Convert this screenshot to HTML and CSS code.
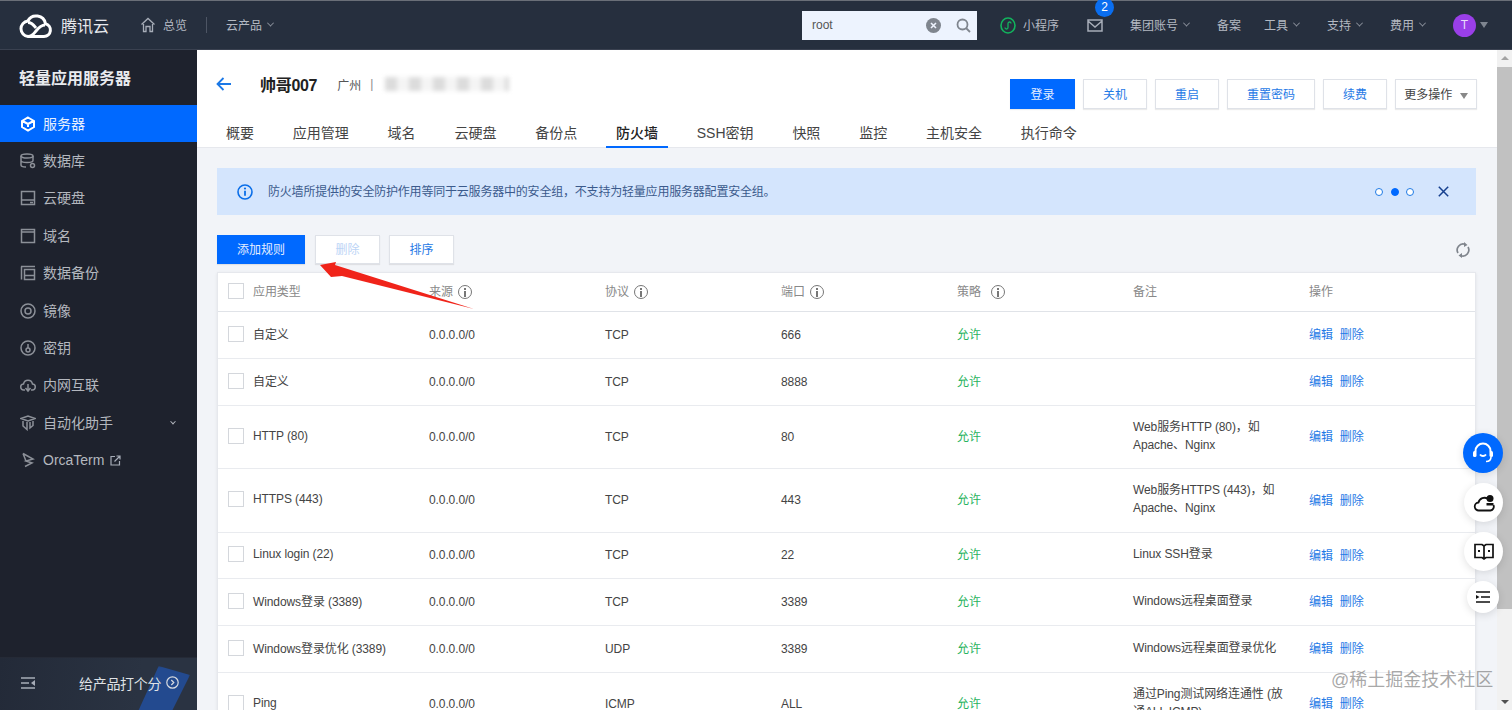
FILE: index.html
```html
<!DOCTYPE html>
<html lang="zh-CN">
<head>
<meta charset="utf-8">
<title>防火墙</title>
<link rel="stylesheet" href="styles.css">
</head>
<body>
<header class="topbar">
  <div class="logo">
    <svg class="logo-mark" width="34" height="25" viewBox="0 0 34 25"><path d="M9 23.500h16a6.500 6.500 0 0 0 1.500-12.800A9.500 9.500 0 0 0 8.800 8 7.800 7.800 0 0 0 9 23.500zM9 23.500c4 0 6-3 8-5.500s5-6 9-6" fill="none" stroke="#fff" stroke-width="3"/><path d="M9 9.500c4 0 6 3 8 5.500" fill="none" stroke="#fff" stroke-width="3"/></svg>
    <span class="logo-text">腾讯云</span>
  </div>
  <div class="nav-item overview">
    <svg width="16" height="16" viewBox="0 0 16 16"><path d="M1.500 7.500 8 1.500l6.500 6M3.500 7v7.500h2.500V9.500h4v5h2.500V7" fill="none" stroke="#a7adb8" stroke-width="1.300"/></svg>
    <span>总览</span>
  </div>
  <div class="nav-sep"></div>
  <div class="nav-item">云产品 <i class="chev"></i></div>
  <div class="spacer"></div>
  <div class="search">
    <span class="search-text">root</span>
    <svg width="15" height="15" viewBox="0 0 15 15"><circle cx="7.500" cy="7.500" r="7.500" fill="#7f858e"/><path d="m5 5 5 5M10 5l-5 5" stroke="#eef3fd" stroke-width="1.600"/></svg>
    <svg width="15" height="15" viewBox="0 0 15 15"><circle cx="6.500" cy="6.500" r="5" fill="none" stroke="#7f858e" stroke-width="1.800"/><path d="m10 10 4 4" stroke="#7f858e" stroke-width="1.800"/></svg>
  </div>
  <div class="nav-right">
    <div class="nav-item mini">
      <svg width="16" height="17" viewBox="0 0 16 17"><ellipse cx="8" cy="8.500" rx="7" ry="7.500" fill="none" stroke="#12b35d" stroke-width="1.600"/><path d="M5 10.500c0 2 3 2 3 0v-4c0-2 3-2 3 0" fill="none" stroke="#12b35d" stroke-width="1.300"/></svg>
      <span>小程序</span>
    </div>
    <div class="mail">
      <svg width="16" height="13" viewBox="0 0 16 13"><path d="M1 1h14v11H1zM1 2l7 6 7-6" fill="none" stroke="#a7adb8" stroke-width="1.500"/></svg>
      <span class="badge">2</span>
    </div>
    <div class="nav-item acct">集团账号 <i class="chev"></i></div>
    <div class="nav-item rec">备案</div>
    <div class="nav-item tool">工具 <i class="chev"></i></div>
    <div class="nav-item sup">支持 <i class="chev"></i></div>
    <div class="nav-item fee">费用 <i class="chev"></i></div>
    <span class="avatar">T</span>
    <i class="tri"></i>
  </div>
</header>

<div class="body-row">
  <aside class="sidebar">
    <h2 class="side-title">轻量应用服务器</h2>
    <nav class="side-nav">
      <a class="side-item active"><svg width="16" height="16" viewBox="0 0 16 16"><path d="M8 1.500 14 5v6l-6 3.500L2 11V5zM2.500 5 8 8l5.500-3M8 8v3" fill="none" stroke="#fff" stroke-width="2"/></svg><span>服务器</span></a>
      <a class="side-item"><svg width="16" height="16" viewBox="0 0 16 16"><ellipse cx="7" cy="3" rx="6" ry="2" class="ic"/><path d="M1 3v9c0 1 2 2 5 2M1 7.500c0 1 2 2 6 2s6-1 6-2V3" class="ic"/><circle cx="12.500" cy="12.500" r="2" class="ic"/></svg><span>数据库</span></a>
      <a class="side-item"><svg width="16" height="16" viewBox="0 0 16 16"><path d="M1.500 1.500h13v13h-13zM1.500 10h13M10 12.500h3" class="ic"/></svg><span>云硬盘</span></a>
      <a class="side-item"><svg width="16" height="16" viewBox="0 0 16 16"><path d="M1.500 1.500h13v13h-13zM1.500 4h13" class="ic"/></svg><span>域名</span></a>
      <a class="side-item"><svg width="16" height="16" viewBox="0 0 16 16"><path d="M1 1.500h14M1.500 1.500v13M4.500 4.500h10v10h-10zM4.500 10.500h10" class="ic"/></svg><span>数据备份</span></a>
      <a class="side-item"><svg width="16" height="16" viewBox="0 0 16 16"><circle cx="8" cy="8" r="7" class="ic"/><circle cx="8" cy="8" r="3" class="ic"/></svg><span>镜像</span></a>
      <a class="side-item"><svg width="16" height="16" viewBox="0 0 16 16"><circle cx="8" cy="8" r="7" class="ic"/><circle cx="8" cy="10" r="2" class="ic"/><path d="M8 4v4" class="ic"/></svg><span>密钥</span></a>
      <a class="side-item"><svg width="16" height="16" viewBox="0 0 16 16"><path d="M5 13H4a3 3 0 0 1-.5-6A4.600 4.600 0 0 1 12.500 7a3 3 0 0 1-.5 6h-1M8 7v7M5.500 11 8 14l2.500-3" class="ic"/></svg><span>内网互联</span></a>
      <a class="side-item"><svg width="16" height="16" viewBox="0 0 16 16"><path d="M1 3.500 8 1l7 2.500-7 2.500zM3 6v5l4 3.500V7M10 7v6l3-2.500V6" class="ic"/></svg><span>自动化助手</span><i class="chev side-chev"></i></a>
      <a class="side-item orca"><svg width="16" height="16" viewBox="0 0 16 16"><path d="M3 1.500 13 7l-7 2 6 2-7 3.500M3 1.500 6 9" class="ic"/></svg><span>OrcaTerm</span><svg class="ext" width="11" height="11" viewBox="0 0 11 11"><path d="M5 1.500H1v8.500h8.500V6M4.500 6.500 10 1M6.500 1H10v3.500" fill="none" stroke="#a7adb8" stroke-width="1.200"/></svg></a>
    </nav>
    <div class="side-foot">
      <svg width="15" height="12" viewBox="0 0 15 12"><path d="M0 1h14M0 6h8M0 11h14" stroke="#a7adb8" stroke-width="1.600"/><path d="M14 3v6l-4-3z" fill="#a7adb8"/></svg>
      <span class="rate">给产品打个分</span>
      <svg class="rate-go" width="13" height="13" viewBox="0 0 13 13"><circle cx="6.500" cy="6.500" r="5.700" fill="none" stroke="#d8dbe0" stroke-width="1.200"/><path d="m5.300 4 2.500 2.500-2.500 2.500" fill="none" stroke="#d8dbe0" stroke-width="1.200"/></svg>
    </div>
  </aside>

  <main class="main">
    <section class="page-head">
      <div class="title-row">
        <div class="title-left">
          <svg class="back" width="15" height="14" viewBox="0 0 15 14"><path d="M15 7H1.500M7.500 1 1.500 7l6 6" fill="none" stroke="#1b78e6" stroke-width="1.800"/></svg>
          <h1 class="inst-name">帅哥007</h1>
          <span class="region">广州</span>
          <span class="region-sep">|</span>
          <span class="blurred"></span>
        </div>
        <div class="spacer"></div>
        <div class="actions">
          <button class="btn primary login">登录</button>
          <button class="btn w-a">关机</button>
          <button class="btn w-a">重启</button>
          <button class="btn w-b">重置密码</button>
          <button class="btn w-a">续费</button>
          <button class="btn more">更多操作 <i class="tri small"></i></button>
        </div>
      </div>
      <div class="tabs">
        <a class="tab">概要</a>
        <a class="tab">应用管理</a>
        <a class="tab">域名</a>
        <a class="tab">云硬盘</a>
        <a class="tab">备份点</a>
        <a class="tab on">防火墙</a>
        <a class="tab">SSH密钥</a>
        <a class="tab">快照</a>
        <a class="tab">监控</a>
        <a class="tab">主机安全</a>
        <a class="tab">执行命令</a>
      </div>
    </section>

    <section class="content">
      <div class="notice">
        <svg width="16" height="16" viewBox="0 0 16 16"><circle cx="8" cy="8" r="7" fill="none" stroke="#0a6ee8" stroke-width="1.600"/><path d="M8 6.800v5" stroke="#0a6ee8" stroke-width="1.800"/><circle cx="8" cy="4.500" r="1.100" fill="#0a6ee8"/></svg>
        <span class="notice-text">防火墙所提供的安全防护作用等同于云服务器中的安全组，不支持为轻量应用服务器配置安全组。</span>
        <div class="spacer"></div>
        <div class="dots"><i class="dot"></i><i class="dot cur"></i><i class="dot"></i></div>
        <svg class="close" width="11" height="11" viewBox="0 0 11 11"><path d="m.8.800 9.400 9.400M10.200.800.8 10.200" stroke="#16408f" stroke-width="1.500"/></svg>
      </div>

      <div class="toolbar">
        <button class="btn primary add">添加规则</button>
        <button class="btn off">删除</button>
        <button class="btn sort">排序</button>
        <div class="spacer"></div>
        <svg width="14" height="16" viewBox="0 0 14 16"><path d="M2 11A6 6 0 0 1 9 2.300M12 5a6 6 0 0 1-7 8.700" fill="none" stroke="#80858d" stroke-width="1.700"/><path d="m8 0 3.500 3L8 5zM6 11 2.500 13.500 6 16z" fill="#80858d"/></svg>
      </div>

      <div class="table-card">
        <table class="rules">
          <colgroup><col class="c0"><col class="c1"><col class="c1"><col class="c1"><col class="c1"><col class="c1"><col></colgroup>
          <thead>
            <tr>
              <th><span class="cell-check"><i class="check"></i>应用类型</span></th>
              <th>来源<i class="info"></i></th>
              <th>协议<i class="info"></i></th>
              <th>端口<i class="info"></i></th>
              <th>策略<i class="info wide"></i></th>
              <th>备注</th>
              <th>操作</th>
            </tr>
          </thead>
          <tbody>
            <tr class="r47"><td><span class="cell-check"><i class="check"></i>自定义</span></td><td>0.0.0.0/0</td><td>TCP</td><td>666</td><td class="ok">允许</td><td></td><td class="ops"><a>编辑</a><a>删除</a></td></tr>
            <tr class="r47"><td><span class="cell-check"><i class="check"></i>自定义</span></td><td>0.0.0.0/0</td><td>TCP</td><td>8888</td><td class="ok">允许</td><td></td><td class="ops"><a>编辑</a><a>删除</a></td></tr>
            <tr class="r63"><td><span class="cell-check"><i class="check"></i>HTTP (80)</span></td><td>0.0.0.0/0</td><td>TCP</td><td>80</td><td class="ok">允许</td><td class="note">Web服务HTTP (80)，如Apache、Nginx</td><td class="ops"><a>编辑</a><a>删除</a></td></tr>
            <tr class="r64"><td><span class="cell-check"><i class="check"></i>HTTPS (443)</span></td><td>0.0.0.0/0</td><td>TCP</td><td>443</td><td class="ok">允许</td><td class="note">Web服务HTTPS (443)，如Apache、Nginx</td><td class="ops"><a>编辑</a><a>删除</a></td></tr>
            <tr class="r46"><td><span class="cell-check"><i class="check"></i>Linux login (22)</span></td><td>0.0.0.0/0</td><td>TCP</td><td>22</td><td class="ok">允许</td><td class="note">Linux SSH登录</td><td class="ops"><a>编辑</a><a>删除</a></td></tr>
            <tr class="r47"><td><span class="cell-check"><i class="check"></i>Windows登录 (3389)</span></td><td>0.0.0.0/0</td><td>TCP</td><td>3389</td><td class="ok">允许</td><td class="note">Windows远程桌面登录</td><td class="ops"><a>编辑</a><a>删除</a></td></tr>
            <tr class="r47"><td><span class="cell-check"><i class="check"></i>Windows登录优化 (3389)</span></td><td>0.0.0.0/0</td><td>UDP</td><td>3389</td><td class="ok">允许</td><td class="note">Windows远程桌面登录优化</td><td class="ops"><a>编辑</a><a>删除</a></td></tr>
            <tr class="r63"><td><span class="cell-check"><i class="check"></i>Ping</span></td><td>0.0.0.0/0</td><td>ICMP</td><td>ALL</td><td class="ok">允许</td><td class="note">通过Ping测试网络连通性 (放通ALL ICMP)</td><td class="ops"><a>编辑</a><a>删除</a></td></tr>
          </tbody>
        </table>
      </div>
    </section>
  </main>

  <div class="scrollbar">
    <i class="sb-up"></i>
    <div class="sb-thumb"></div>
    <div class="spacer"></div>
    <i class="sb-down"></i>
  </div>
</div>

<svg class="arrow" width="156" height="50" viewBox="0 0 156 50"><path d="M0 3 16 0 15 3 154 47 22 14 11 15z" fill="#f0241a"/></svg>

<div class="float f1"><svg width="22" height="22" viewBox="0 0 22 22"><path d="M3.500 10V9a7.500 7.500 0 0 1 15 0v1" fill="none" stroke="#fff" stroke-width="2"/><rect x="1" y="9" width="3.500" height="6" rx="1.500" fill="#fff"/><rect x="17.500" y="9" width="3.500" height="6" rx="1.500" fill="#fff"/><path d="M19 15c0 3-2 4.500-5 4.500" fill="none" stroke="#fff" stroke-width="1.600"/><path d="M8 12.500c1.500 2 4.500 2 6 0" fill="none" stroke="#fff" stroke-width="1.800"/></svg></div>
<div class="float f2"><svg width="22" height="18" viewBox="0 0 22 18"><path d="M6 16.500a4 4 0 0 1-.5-8A6 6 0 0 1 15 5M20.500 11a4 4 0 0 1-3 5.500H6" fill="none" stroke="#111" stroke-width="1.800"/><circle cx="17" cy="4.500" r="3.500" fill="#111"/><path d="M13.500 9h7v2.500h-7z" fill="#111"/></svg></div>
<div class="float f3"><svg width="20" height="18" viewBox="0 0 20 18"><path d="M1 1.500h7l2 1.500 2-1.500h7v13h-7l-2 1.500-2-1.500H1zM10 3v12" fill="none" stroke="#111" stroke-width="1.700"/><path d="M4 8h2M14 8h2" stroke="#111" stroke-width="2"/></svg></div>
<div class="float f4"><svg width="14" height="12" viewBox="0 0 14 12"><path d="M0 1h14M5 6h9M0 11h14" stroke="#111" stroke-width="1.500"/><path d="M0 4v4l3.500-2z" fill="#111"/></svg></div>

<div class="watermark">@稀土掘金技术社区</div>
</body>
</html>
```

FILE: styles.css
```css
* { box-sizing: border-box; }
html, body { margin: 0; height: 710px; overflow: hidden; }
body {
  font-family: "Liberation Sans", "Noto Sans CJK SC", sans-serif;
  font-size: 12px;
  color: #444;
  background: #f2f4f8;
  position: relative;
}
i { font-style: normal; display: inline-block; }
.spacer { flex: 1; }

.topbar {
  height: 50px;
  background: #262f3e;
  border-top: 1px solid #6a6f78;
  border-bottom: 1px solid #3a4150;
  display: flex;
  align-items: center;
  color: #b4b9c2;
  padding-left: 19px;
}
.logo { display: flex; align-items: center; gap: 8px; width: 121px; }
.logo-text { font-size: 16px; color: #e6e8ec; }
.nav-item { display: flex; align-items: center; gap: 4px; white-space: nowrap; padding-bottom: 2px; flex: none; }
.overview { gap: 7px; }
.overview svg, .mini svg { margin-top: 2px; }
.nav-sep { width: 1px; height: 16px; background: #4d5564; margin: 0 19px; }
.chev {
  width: 5px; height: 5px;
  border-right: 1px solid #8b919c;
  border-bottom: 1px solid #8b919c;
  transform: rotate(45deg) translate(-1px, -1px);
  margin-left: 2px;
}
.search {
  width: 175px; height: 29px;
  background: #edf3fe;
  display: flex;
  align-items: center;
  gap: 15px;
  padding: 0 6px 0 10px;
  color: #555;
  flex: none;
}
.search-text { flex: 1; }
.nav-right { display: flex; align-items: center; height: 100%; padding-left: 23px; width: 535px; flex: none; }
.mini { gap: 7px; width: 87px; }
.mail { position: relative; width: 43px; display: flex; flex: none; }
.badge {
  position: absolute; left: 8px; top: -21px;
  width: 19px; height: 19px; border-radius: 50%;
  background: #0a6ef0; color: #fff; font-size: 12px;
  display: flex; align-items: center; justify-content: center;
}
.acct { width: 87px; }
.rec { width: 47px; }
.tool, .sup, .fee { width: 63px; }
.avatar {
  width: 23px; height: 23px; border-radius: 50%;
  background: #9a3fe8; color: #e9dcfb;
  display: flex; align-items: center; justify-content: center;
  font-size: 12px; flex: none;
}
.tri { width: 0; height: 0; border: 4px solid transparent; border-top: 6px solid #7e8590; border-bottom: 0; margin-left: 4px; }
.tri.small { border-top-color: #888; }

.body-row { display: flex; height: 660px; }
.sidebar { width: 197px; background: #1e222d; display: flex; flex-direction: column; flex: none; }
.side-title { margin: 0; height: 55px; padding: 19px 0 0 19px; font-size: 16px; line-height: 20px; font-weight: 700; color: #e8eaee; }
.side-nav { display: flex; flex-direction: column; }
.side-item {
  height: 37.4px; display: flex; align-items: center; gap: 7px;
  padding-left: 20px; font-size: 14px; color: #b4b8bf;
}
.side-item span { padding-bottom: 2px; }
.side-item.orca span { padding-bottom: 0; }
.side-item.active { background: #0069ff; color: #e6effd; }
.ic { fill: none; stroke: #8c9098; stroke-width: 1.500; }
.side-chev { margin-left: 51px; width: 4px; height: 4px; border-color: #b4b8bf; }
.ext { margin-left: -1px; }
.side-foot {
  margin-top: auto;
  height: 53px;
  background: linear-gradient(100deg, #232a38, #2a3342 70%);
  display: flex; align-items: center;
  padding-left: 21px; padding-bottom: 3px; gap: 5px;
  border-top: 1px solid #252a36;
  overflow: hidden;
  position: relative;
}
.side-foot::after {
  content: "";
  position: absolute; left: 136px; top: 8px; width: 54px; height: 50px;
  background: #234a8f;
  clip-path: polygon(42% 0, 100% 18%, 62% 100%, 0 100%);
  filter: blur(1px);
}
.rate { margin-left: 38px; font-size: 14px; color: #dfe2e6; letter-spacing: -.3px; position: relative; z-index: 1; }
.rate-go { position: relative; z-index: 1; }

.main { flex: 1; min-width: 0; display: flex; flex-direction: column; }
.page-head { height: 98px; background: #fff; padding: 0 20px 0 19px; border-bottom: 1px solid #e6e8ed; display: flex; flex-direction: column; flex: none; }
.title-row { display: flex; height: 70px; flex: none; }
.title-left { display: flex; align-items: center; height: 68px; }
.actions { display: flex; gap: 8px; padding-top: 29px; align-items: flex-start; }
.back { margin-right: 29px; }
.inst-name { margin: 0 20px 0 0; font-size: 16px; font-weight: 700; color: #222; letter-spacing: -.3px; }
.region { color: #555; }
.region-sep { margin: 0 12px 0 9px; color: #888; }
.blurred {
  width: 124px; height: 14px;
  background: repeating-linear-gradient(90deg, #dcdcdc 0 12px, #f4f4f4 12px 24px);
  filter: blur(2px);
}
.btn {
  font: inherit; height: 30px; padding: 0 0 2px; cursor: pointer;
  background: #fff; color: #1f7ae6; border: 1px solid #dfe2e8;
  box-shadow: 0 1px 1px rgba(0,0,0,.08);
  flex: none;
}
.btn.primary { background: #0069ff; border-color: #0069ff; color: #e4eeff; }
.login { width: 65px; }
.w-a { width: 64px; }
.w-b { width: 88px; }
.more { width: 82px; color: #444; }
.tabs { display: flex; gap: 38.8px; padding-left: 10px; height: 28px; flex: none; }
.tab { font-size: 14px; color: #444; height: 28px; line-height: 26px; white-space: nowrap; }
.tab.on { color: #222; position: relative; font-weight: 500; }
.tab.on::after { content: ""; position: absolute; left: -10px; right: -10px; bottom: 0; height: 2px; background: #0069ff; }

.content { flex: 1; padding: 20px 21px 0 20px; min-height: 0; overflow: hidden; }
.notice {
  height: 47px; background: #d4e5fd;
  display: flex; align-items: center;
  padding: 0 27px 0 20px;
  color: #3b5a8c;
}
.notice-text { margin-left: 15px; letter-spacing: -.2px; padding-bottom: 2px; }
.dots { display: flex; gap: 7.500px; margin-right: 24px; }
.dot { width: 8px; height: 8px; border-radius: 50%; background: #fff; border: 1px solid #1f7ae6; }
.dot.cur { background: #0069ff; border-color: #0069ff; }

.toolbar { display: flex; align-items: center; gap: 9px; height: 29px; margin-top: 20px; padding-right: 6px; }
.toolbar .btn { height: 29px; }
.add { width: 88px; margin-right: 1px; }
.btn.off { width: 65px; color: #bcd4f6; }
.sort { width: 65px; }

.table-card { margin-top: 8px; background: #fff; border: 1px solid #e6e8ed; box-shadow: 0 1px 3px rgba(0,0,0,.08); }
.rules { width: 100%; border-collapse: collapse; table-layout: fixed; letter-spacing: -.1px; }
.c0 { width: 211px; }
.c1 { width: 176px; }
.rules th { height: 38px; font-weight: 400; text-align: left; color: #888; padding: 0 0 2px; border-bottom: 1px solid #e0e3e8; }
.rules td { padding: 0; color: #444; border-bottom: 1px solid #e9ebef; }
.rules tr > :first-child { padding-left: 10px; }
.rules td:first-child { padding-bottom: 2px; }
.cell-check { display: flex; align-items: center; gap: 9px; white-space: nowrap; }
.check { width: 16px; height: 16px; border: 1px solid #d4d7dc; background: #fff; flex: none; }
.r46 { height: 46px; }
.r47 { height: 47px; }
.r63 { height: 63px; }
.r64 { height: 64px; }
.rules .ok { color: #29b35e; padding-bottom: 3px; }
.rules .ops { padding-bottom: 2px; }
.rules .note { line-height: 18px; padding: 0 20px 2px 0; }
.ops a { color: #1f7ae6; margin-right: 7px; }
.info {
  width: 14px; height: 14px; border: 1px solid #777; border-radius: 50%;
  margin-left: 5px; vertical-align: -3px; position: relative;
}
.info::before { content: ""; position: absolute; left: 5px; top: 5px; width: 2px; height: 6px; background: #777; }
.info::after { content: ""; position: absolute; left: 5px; top: 2px; width: 2px; height: 2px; background: #777; }
.info.wide { margin-left: 10px; }

.scrollbar { width: 15px; flex: none; background: #f1f1f1; display: flex; flex-direction: column; align-items: center; }
.sb-thumb { width: 100%; height: 542px; background: #c1c1c1; margin-top: 7px; }
.sb-up { width: 0; height: 0; margin-top: 6px; border: 4px solid transparent; border-bottom: 4px solid #a3a3a3; border-top: 0; }
.sb-down { width: 0; height: 0; margin-bottom: 6px; border: 4px solid transparent; border-top: 4px solid #505050; border-bottom: 0; }

.arrow { position: absolute; left: 320px; top: 262px; }
.float {
  position: absolute; border-radius: 50%; background: #fff;
  box-shadow: 0 2px 8px rgba(0,0,0,.12);
  display: flex; align-items: center; justify-content: center;
}
.f1 { left: 1463px; top: 433px; width: 40px; height: 40px; background: #0069ff; }
.f2 { left: 1464px; top: 483px; width: 39px; height: 39px; }
.f3 { left: 1464px; top: 532px; width: 39px; height: 39px; }
.f4 { left: 1467px; top: 581px; width: 32px; height: 32px; }
.watermark {
  position: absolute; left: 1331px; top: 669px;
  font-size: 18px; line-height: 22px; color: rgba(110,110,110,.6);
  white-space: nowrap;
}
```
